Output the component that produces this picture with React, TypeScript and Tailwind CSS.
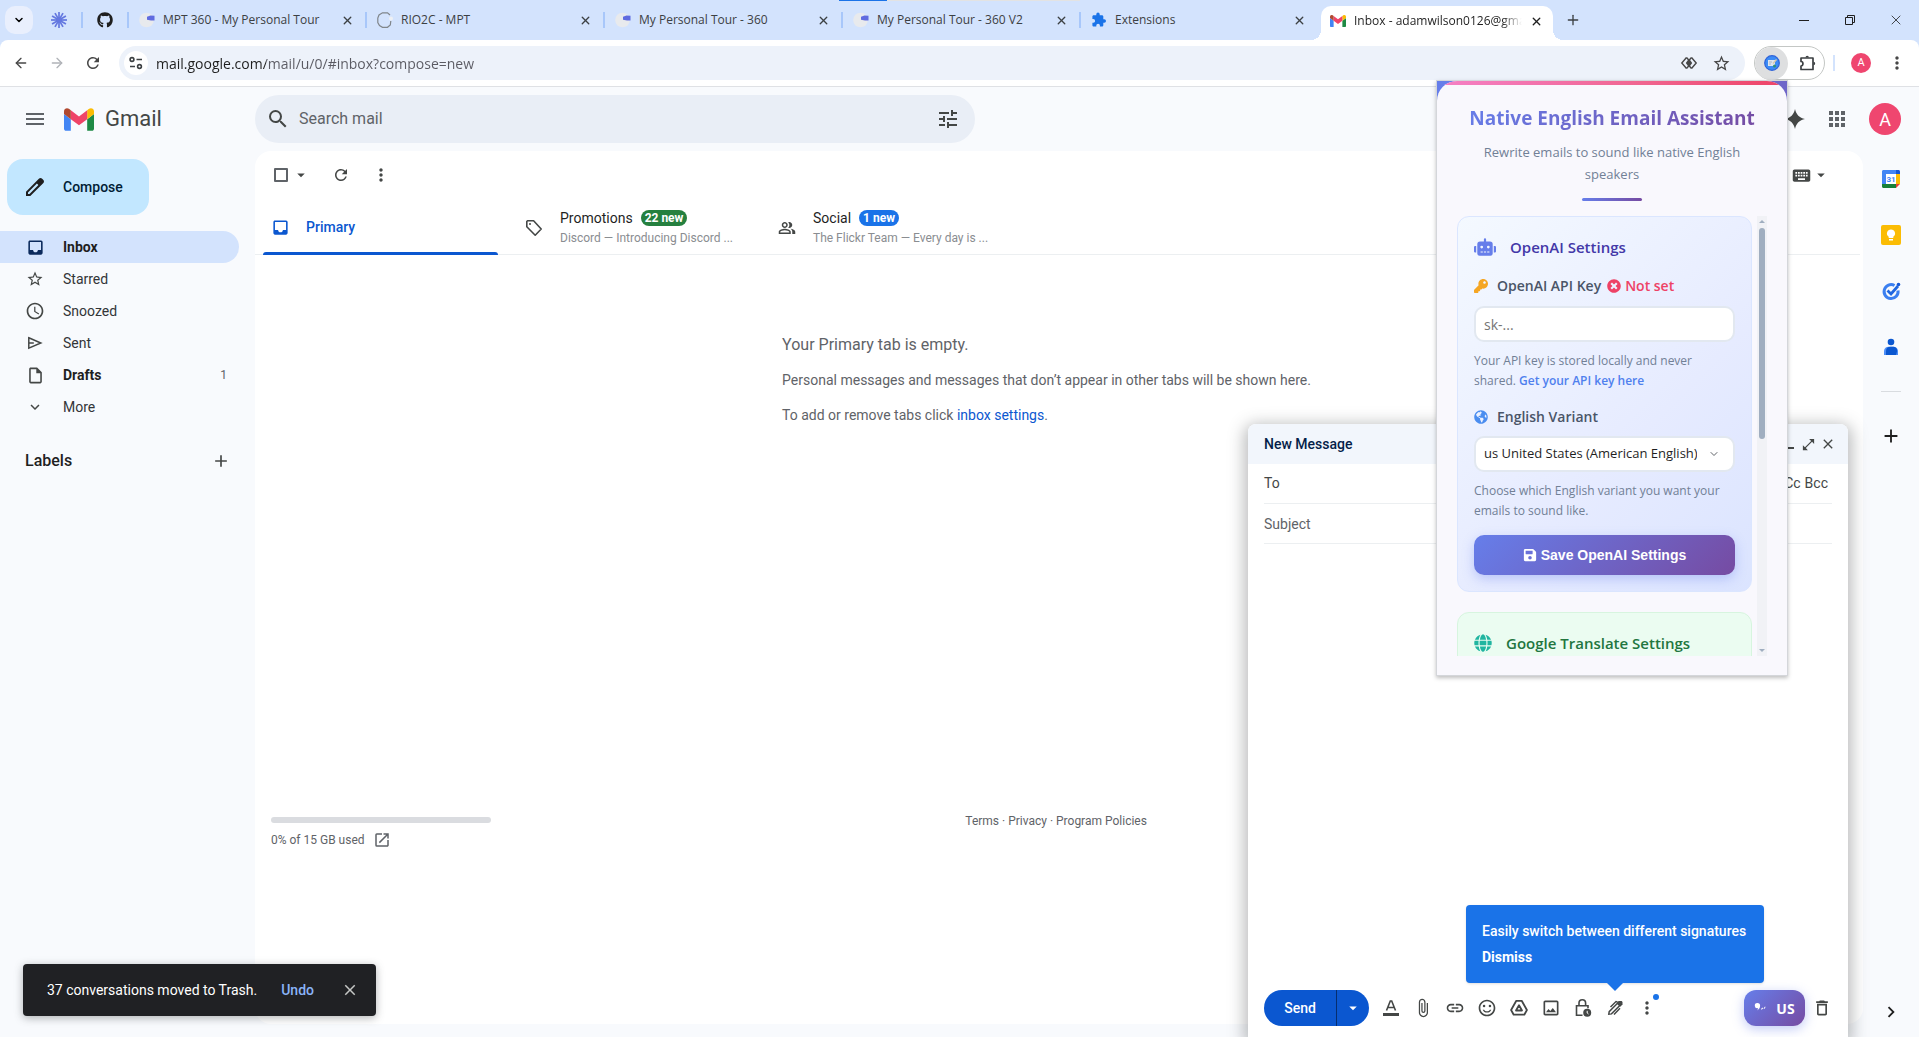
import { useState } from "react"
import type { ReactNode } from "react"
import clsx from "clsx"
import {
  MdAdd,
  MdApps,
  MdArrowDropDown,
  MdAttachFile,
  MdChevronRight,
  MdClose,
  MdDeleteOutline,
  MdInbox,
  MdKeyboard,
  MdKeyboardArrowDown,
  MdLink,
  MdMenu,
  MdMoreVert,
  MdOpenInFull,
  MdOpenInNew,
  MdOutlineImage,
  MdOutlineInsertDriveFile,
  MdOutlinePeopleAlt,
  MdOutlineSentimentSatisfiedAlt,
  MdRefresh,
  MdSchedule,
  MdSearch,
  MdStarBorder,
  MdTune,
} from "react-icons/md"
import { FaGithub, FaGlobe, FaGlobeAmericas, FaKey, FaRobot, FaSave, FaTimesCircle } from "react-icons/fa"
import { ArrowLeft, ArrowRight, ChevronDown, Plus, X } from "lucide-react"

/* ---------- drawings ---------- */

function GmailLogo({ className }: { className?: string }) {
  return (
    <svg viewBox="52 42 88 66" className={className} aria-hidden="true">
      <path fill="#4285f4" d="M58 108h14V74L52 59v43c0 3.32 2.69 6 6 6" />
      <path fill="#1e8a45" d="M120 108h14c3.32 0 6-2.69 6-6V59l-20 15" />
      <path fill="#fbbc04" d="M120 48v26l20-15v-8c0-7.42-8.47-11.65-14.4-7.2" />
      <path fill="#ef4468" d="M72 74V48l24 18 24-18v26L96 92" />
      <path fill="#b0482f" d="M52 51v8l20 15V48l-5.6-4.2c-5.94-4.45-14.4-.22-14.4 7.2" />
    </svg>
  )
}

function BurstIcon() {
  return (
    <svg viewBox="0 0 16 16" className="size-4" aria-hidden="true">
      {[0, 30, 60, 90, 120, 150].map((a) => (
        <line key={a} x1="8" y1="0" x2="8" y2="16" stroke="#6478e0" strokeWidth="1.7" transform={`rotate(${a} 8 8)`} />
      ))}
      <circle cx="8" cy="8" r="3" fill="#6478e0" />
    </svg>
  )
}

function TourFavicon() {
  return (
    <svg viewBox="0 0 16 16" className="size-4" aria-hidden="true">
      <circle cx="7.5" cy="8" r="7.3" fill="#e8eaed" />
      <path d="M8 4.800L11.500 3.500l4 .3v4.700h-3.500L8 7.800z" fill="#5f6be0" />
    </svg>
  )
}

function RingFavicon() {
  return (
    <svg viewBox="0 0 16 16" className="size-4" aria-hidden="true">
      <path d="M13 3L10.500.8h-5L2 3 .8 6v4.500L2.500 13.500l3 1.800h5l2.800-2.300.5-4" fill="none" stroke="#80868b" strokeWidth="1.200" />
      <circle cx="14" cy="6.500" r="2" fill="#eef0f4" />
    </svg>
  )
}

function PuzzleIcon() {
  return (
    <svg viewBox="0 0 16 16" className="size-4" aria-hidden="true">
      <path
        fill="#1a73e8"
        d="M13.3 7.3h-1V4.6c0-.7-.6-1.3-1.3-1.3H8.7V2.2a1.7 1.7 0 0 0-3.4 0v1.1H2.7c-.8 0-1.3.6-1.3 1.3v2.5h.9a1.8 1.8 0 0 1 0 3.6h-.9v2.6c0 .7.6 1.3 1.3 1.3h2.6v-1a1.8 1.8 0 0 1 3.6 0v1h2.1c.7 0 1.3-.6 1.3-1.3v-2.6h1a1.7 1.7 0 0 0 0-3.4z"
      />
    </svg>
  )
}

function TuneCircle() {
  return (
    <svg viewBox="0 0 16 16" className="size-4" fill="none" stroke="#3c4043" strokeWidth="1.6" aria-hidden="true">
      <circle cx="4" cy="4.5" r="1.9" />
      <path d="M8.5 4.5H14M2 11.5h5" />
      <circle cx="11.5" cy="11.5" r="1.9" />
    </svg>
  )
}

function LensIcon() {
  return (
    <svg viewBox="0 0 18 18" className="size-[18px]" fill="none" stroke="#474747" strokeWidth="1.4" aria-hidden="true">
      <path d="M6.500 3.500L1.800 9l4.700 5.500M11.500 3.500L16.200 9l-4.700 5.500" />
      <path d="M6.500 3.500L9 6.500l2.500-3M6.500 14.500L9 11.500l2.500 3" />
      <path d="M9 4.500L5.800 9 9 13.500 12.200 9z" fill="#474747" stroke="none" />
    </svg>
  )
}

function ExtensionsIcon() {
  return (
    <svg viewBox="0 0 18 18" className="size-[18px]" fill="none" stroke="#3c4043" strokeWidth="1.7" strokeLinejoin="round" aria-hidden="true">
      <path d="M2 4h12v11.500H2V12c2.600 0 2.600-4.500 0-4.500z" />
      <path d="M6.500 3.500a1.700 1.700 0 0 1 3.400 0zM14.500 7.800a1.700 1.700 0 0 1 0 3.400z" fill="#3c4043" stroke="none" />
    </svg>
  )
}

function AssistantBadge() {
  return (
    <svg viewBox="0 0 16 16" className="size-4" aria-hidden="true">
      <circle cx="8" cy="8" r="7.300" fill="#3b8bf5" stroke="#2f62d8" strokeWidth="1.200" />
      <rect x="4" y="5" width="7" height="6" fill="#dfe5ee" />
      <path d="M8.500 8l3.500-4 1 1-3.500 4z" fill="#d9c9a8" />
      <path d="M5 7h3M5 9h2" stroke="#9aa7bb" strokeWidth=".8" />
      <circle cx="10.500" cy="11" r="1.500" fill="#2f8f78" />
    </svg>
  )
}

function RestoreIcon() {
  return (
    <svg viewBox="0 0 10 10" className="size-[10px]" fill="none" stroke="#1f1f1f" strokeWidth="1" aria-hidden="true">
      <path d="M.5 2.500h7v7h-7zM2.500 2.500v-2h7v7h-2" />
    </svg>
  )
}

function SparkIcon({ className }: { className?: string }) {
  return (
    <svg viewBox="0 0 24 24" className={className} fill="currentColor" aria-hidden="true">
      <path d="M12 2c1.200 5.600 4.400 8.800 10 10-5.600 1.200-8.800 4.400-10 10-1.200-5.600-4.400-8.800-10-10 5.600-1.200 8.800-4.400 10-10z" />
    </svg>
  )
}

function PencilIcon() {
  return (
    <svg viewBox="0 0 24 24" className="size-6" aria-hidden="true">
      <path
        fill="#1f1f1f"
        d="M20.400 5.100l-1.500-1.500c-.8-.8-2-.8-2.800 0L3 16.700V21h4.300L20.400 7.900c.8-.8.8-2 0-2.800zM6.500 19H5v-1.500l8.900-8.900 1.500 1.500z"
      />
    </svg>
  )
}

function SentIcon() {
  return (
    <svg viewBox="0 0 20 20" className="size-5" fill="none" stroke="#444746" strokeWidth="1.500" aria-hidden="true">
      <path d="M3.800 4.800L15.800 10 3.800 15.200zM3.800 10h5" />
    </svg>
  )
}

function TagIcon() {
  return (
    <svg viewBox="0 0 20 20" className="size-5" fill="none" stroke="#444746" strokeWidth="1.600" strokeLinejoin="round" aria-hidden="true">
      <path d="M2.800 3.500v5.300l8.400 8.400 6-6.200-7.600-8.200H3.500z" />
      <circle cx="6" cy="6" r="1" fill="#444746" stroke="none" />
    </svg>
  )
}

function CalendarIcon() {
  return (
    <svg viewBox="0 0 20 20" className="size-5" aria-hidden="true">
      <path fill="#4285f4" d="M1 2.500C1 1.600 1.600 1 2.500 1H15v4H5v10H1z" />
      <path fill="#1558d6" d="M15 1h2.500c.9 0 1.500.6 1.500 1.500V5h-4z" />
      <path fill="#fbbc04" d="M15 5h4v10h-4z" />
      <path fill="#188038" d="M1 15h14v4H2.500C1.600 19 1 18.400 1 17.500z" />
      <path fill="#ea4335" d="M15 15h4l-4 4z" />
      <path fill="#fff" d="M5 5h10v10H5z" />
      <text x="10" y="13" textAnchor="middle" fontSize="8" fontWeight="700" fontFamily="Roboto, sans-serif" fill="#4285f4">
        31
      </text>
    </svg>
  )
}

function KeepIcon() {
  return (
    <svg viewBox="0 0 20 20" className="size-5" aria-hidden="true">
      <rect width="20" height="20" rx="2" fill="#fbbc04" />
      <path fill="#fff" d="M10 4.500a4 4 0 0 0-2.300 7.300V13h4.600v-1.200A4 4 0 0 0 10 4.500zM8 14h4v1.500H8z" />
    </svg>
  )
}

function TasksIcon() {
  return (
    <svg viewBox="0 0 20 20" className="size-5" fill="none" aria-hidden="true">
      <path d="M13.500 4.500A7 7 0 1 0 17 9.500" stroke="#3b7ff0" strokeWidth="3" />
      <path d="M6.500 9.500l3.500 3.500L17 5" stroke="#1f66e0" strokeWidth="2.800" />
      <circle cx="17.500" cy="3.500" r="1.800" fill="#1558d6" />
    </svg>
  )
}

function ContactsIcon() {
  return (
    <svg viewBox="0 0 20 20" className="size-5" aria-hidden="true">
      <circle cx="10" cy="5" r="3.300" fill="#0b57d0" />
      <path fill="#4c8df6" d="M3 14.500C3 11 5.500 9.800 8 9.800h4c2.500 0 5 1.200 5 4.700V18H3z" />
      <path fill="#0b57d0" d="M5 14c0-3 2-4.200 4.500-4.200h2.700c2 0 4 1.400 4 4.200L15 18H5z" />
    </svg>
  )
}

function DriveIcon() {
  return (
    <svg viewBox="0 0 20 20" className="size-5" fill="none" stroke="#444746" strokeWidth="1.800" strokeLinejoin="round" aria-hidden="true">
      <path d="M7.300 2.800h5.400l5.200 9.200-2.600 4.700H4.700L2.100 12z" />
      <path d="M10 7.300l3 5.200H7z" />
    </svg>
  )
}

function LockClockIcon() {
  return (
    <svg viewBox="0 0 20 20" className="size-5" fill="none" stroke="#444746" strokeWidth="1.600" aria-hidden="true">
      <path d="M9.500 17.200h-6V7.700H15v2.500M6 7.500V5a3.300 3.300 0 0 1 6.600 0v2.500" />
      <circle cx="14.200" cy="14.800" r="4" fill="#444746" stroke="none" />
      <path d="M14.200 12.800v2.200l1.300 1" stroke="#fff" strokeWidth="1" />
    </svg>
  )
}

function SignatureIcon() {
  return (
    <svg viewBox="0 0 20 20" className="size-5" aria-hidden="true">
      <path d="M3.800 16.200l.4-2.600 8.300-8.300 2.300 2.300-8.300 8.300z" fill="none" stroke="#444746" strokeWidth="1.500" />
      <path d="M11.800 4.800l1.800-1.800h3l.9.900v2.600l-2.200 2.200z" fill="#444746" />
      <path d="M5.500 9l5.500-5.500 1.500.5" fill="none" stroke="#444746" strokeWidth="1.500" />
      <path d="M9 16.500l6-6.200" stroke="#444746" strokeWidth="1.500" />
    </svg>
  )
}

function TextFormatIcon() {
  return (
    <svg viewBox="0 0 20 20" className="size-5" fill="none" stroke="#444746" aria-hidden="true">
      <path d="M5.500 12.500L9.300 3h1.400l3.800 9.500M7 9.500h6" strokeWidth="1.600" />
      <path d="M2 16.500h16" strokeWidth="3" />
    </svg>
  )
}

function MinusLow() {
  return (
    <svg viewBox="0 0 16 16" className="size-4" aria-hidden="true">
      <path d="M3 12h10" stroke="#444746" strokeWidth="2" />
    </svg>
  )
}

/* ---------- browser chrome ---------- */

const browserTabs: { title: string; icon: ReactNode }[] = [
  { title: "MPT 360 - My Personal Tour", icon: <TourFavicon /> },
  { title: "RIO2C - MPT", icon: <RingFavicon /> },
  { title: "My Personal Tour - 360", icon: <TourFavicon /> },
  { title: "My Personal Tour - 360 V2", icon: <TourFavicon /> },
  { title: "Extensions", icon: <PuzzleIcon /> },
]

function TabStrip() {
  return (
    <div className="relative flex h-10 items-center bg-[#d3e3fd] font-['Open_Sans',sans-serif]">
      <button aria-label="Search tabs" className="ml-[5px] flex size-7 items-center justify-center rounded-[10px] bg-[#e9effd]">
        <ChevronDown size={12} strokeWidth={3} />
      </button>
      <button aria-label="Pinned tab" className="ml-[18px]">
        <BurstIcon />
      </button>
      <span className="ml-[14px] h-4 w-0.5 bg-[#a8c7fa]" />
      <button aria-label="GitHub" className="ml-[14px]">
        <FaGithub size={16} className="text-[#1f1f1f]" />
      </button>
      <span className="ml-[14px] h-4 w-0.5 bg-[#a8c7fa]" />
      {browserTabs.map((tab, i) => (
        <div key={tab.title} className="flex h-full w-[238px] items-center pl-[10px]">
          {tab.icon}
          <span className="ml-2 flex-1 truncate text-[12px] text-[#3c4043]">{tab.title}</span>
          <button aria-label={`Close ${tab.title}`} className="mr-[11px] text-[#3c4043]">
            <X size={13} strokeWidth={2.5} />
          </button>
          {i < browserTabs.length - 1 ? <span className="h-4 w-0.5 bg-[#a8c7fa]" /> : <span className="w-0.5" />}
        </div>
      ))}
      <div className="relative mt-auto ml-0.5 flex h-[34px] w-[232px] items-center rounded-t-[10px] bg-white pb-1 pl-[9px] before:absolute before:bottom-0 before:-left-2.5 before:size-2.5 before:bg-[radial-gradient(circle_at_0_0,transparent_10px,#fff_10px)] after:absolute after:-right-2.5 after:bottom-0 after:size-2.5 after:bg-[radial-gradient(circle_at_100%_0,transparent_10px,#fff_10px)]">
        <GmailLogo className="h-3 w-4 shrink-0" />
        <span className="ml-2 flex-1 overflow-hidden text-[12px] whitespace-nowrap text-[#1f1f1f] [mask-image:linear-gradient(to_right,#000_88%,transparent)]">
          Inbox - adamwilson0126@gmail.com
        </span>
        <button aria-label="Close Inbox" className="mr-2.5 ml-2 text-[#1f1f1f]">
          <X size={13} strokeWidth={2.5} />
        </button>
      </div>
      <button aria-label="New tab" className="ml-3 text-[#3c4043]">
        <Plus size={16} strokeWidth={2} />
      </button>
      <div className="ml-auto flex items-center">
        <button aria-label="Minimize" className="flex w-[46px] justify-center">
          <span className="h-px w-[10px] bg-[#1f1f1f]" />
        </button>
        <button aria-label="Restore" className="flex w-[46px] justify-center">
          <RestoreIcon />
        </button>
        <button aria-label="Close" className="flex w-[46px] justify-center text-[#1f1f1f]">
          <X size={16} strokeWidth={1.2} />
        </button>
      </div>
      {/* loading bar above the tabs */}
      <span className="absolute top-0 left-[839px] h-px w-[241px] bg-[#e3e3e3]" />
      <span className="absolute top-0 left-[839px] h-px w-12 bg-[#1a73e8]" />
    </div>
  )
}

function AddressBar() {
  const [url, setUrl] = useState("mail.google.com/mail/u/0/#inbox?compose=new")
  return (
    <div className="bg-[#d3e3fd]">
      <div className="flex h-[47px] items-center rounded-t-lg border-b border-[#dfe1e5] bg-white pr-3 text-[#474747]">
        <button aria-label="Back" className="flex w-9 justify-center pl-1.5">
          <ArrowLeft size={16} />
        </button>
        <button aria-label="Forward" className="flex w-9 justify-center pl-1.5 text-[#b0b3b8]">
          <ArrowRight size={16} />
        </button>
        <button aria-label="Reload" className="flex w-9 justify-center pl-1.5">
          <MdRefresh size={18} />
        </button>
        <div className="ml-[11px] flex h-[34px] flex-1 items-center rounded-full bg-[#edf2fa] pr-[14px] pl-[5px]">
          <button aria-label="Site information" className="flex size-6 items-center justify-center rounded-full bg-white">
            <TuneCircle />
          </button>
          <input
            aria-label="Address"
            value={url}
            onChange={(e) => setUrl(e.target.value)}
            className="ml-2 flex-1 bg-[linear-gradient(to_right,#1f1f1f_110px,#5a5a62_110px)] bg-clip-text font-['Open_Sans',sans-serif] text-[14px] text-transparent outline-none"
          />
          <button aria-label="Lens" className="mr-[14px]">
            <LensIcon />
          </button>
          <button aria-label="Bookmark">
            <MdStarBorder size={19} />
          </button>
        </div>
        <div className="ml-[9px] flex h-[34px] items-center rounded-full border border-[#c4c7c5]">
          <button aria-label="Native English Email Assistant" className="flex size-[33px] items-center justify-center rounded-full bg-[#dedfe0]">
            <AssistantBadge />
          </button>
          <button aria-label="Extensions" className="flex w-9 justify-center pl-1">
            <ExtensionsIcon />
          </button>
        </div>
        <span className="ml-2 h-4 w-0.5 bg-[#d3e3fd]" />
        <button aria-label="Profile" className="ml-4 flex size-5 items-center justify-center rounded-full bg-[#ef466f] font-['Roboto',sans-serif] text-[11px] text-white">
          A
        </button>
        <button aria-label="Browser menu" className="ml-4">
          <MdMoreVert size={20} />
        </button>
      </div>
    </div>
  )
}

/* ---------- gmail ---------- */

function GmailHeader() {
  return (
    <header className="flex h-16 shrink-0 items-center">
      <div className="flex w-[255px] shrink-0 items-center pl-[23px]">
        <button aria-label="Main menu" className="text-[#5f6368]">
          <MdMenu size={24} />
        </button>
        <a href="#inbox" className="ml-[17px] flex items-center gap-[11px] text-[22px] leading-6 text-[#444746]">
          <GmailLogo className="h-[23px] w-[30px]" />
          Gmail
        </a>
      </div>
      <div className="flex h-12 w-[720px] items-center rounded-full bg-[#e9eef6] px-[11px] text-[#444746]">
        <button aria-label="Search" className="flex w-6 justify-center">
          <MdSearch size={24} />
        </button>
        <input aria-label="Search mail" placeholder="Search mail" className="ml-[9px] flex-1 text-[16px] outline-none placeholder:text-[#5f6368]" />
        <button aria-label="Search options" className="mr-1">
          <MdTune size={24} />
        </button>
      </div>
      <div className="ml-auto flex items-center pr-[18px]">
        <button aria-label="Assistant" className="text-[#444746]">
          <SparkIcon className="size-6" />
        </button>
        <button aria-label="Google apps" className="ml-[18px] text-[#5f6368]">
          <MdApps size={24} />
        </button>
        <button aria-label="Account" className="ml-5 flex size-8 items-center justify-center rounded-full bg-[#ef466f] text-[18px] text-white">
          A
        </button>
      </div>
    </header>
  )
}

const folders: { name: string; icon: ReactNode; count?: number; bold?: boolean; active?: boolean }[] = [
  { name: "Inbox", icon: <MdInbox size={19} className="text-[#0b2a5c]" />, bold: true, active: true },
  { name: "Starred", icon: <MdStarBorder size={18} /> },
  { name: "Snoozed", icon: <MdSchedule size={20} /> },
  { name: "Sent", icon: <SentIcon /> },
  { name: "Drafts", icon: <MdOutlineInsertDriveFile size={19} />, count: 1, bold: true },
  { name: "More", icon: <MdKeyboardArrowDown size={18} /> },
]

function Sidebar() {
  return (
    <aside className="w-[255px] shrink-0 pt-2">
      <button className="ml-[7px] flex h-14 w-[142px] items-center gap-4 rounded-2xl bg-[#c2e7ff] pl-4 text-[14px] font-medium text-[#001d35]">
        <PencilIcon />
        Compose
      </button>
      <nav className="mt-4">
        {folders.map((f) => (
          <a
            key={f.name}
            href={`#${f.name.toLowerCase()}`}
            className={clsx(
              "mr-4 flex h-8 items-center rounded-r-full pr-3 text-[14px]",
              f.active && "bg-[#d3e3fd]",
              f.bold ? "font-bold text-[#1f1f1f]" : "text-[#333538]"
            )}
          >
            <span className="ml-[25px] flex w-5 justify-center text-[#444746]">{f.icon}</span>
            <span className="ml-[18px] flex-1">{f.name}</span>
            {f.count && <span className="text-[12px] font-normal text-[#5f6368]">{f.count}</span>}
          </a>
        ))}
      </nav>
      <div className="mt-[26px] flex items-center justify-between pr-[24px] pl-[25px] text-[#1f1f1f]">
        <h2 className="text-[16px] leading-6 font-medium">Labels</h2>
        <button aria-label="Create new label" className="text-[#444746]">
          <MdAdd size={20} />
        </button>
      </div>
    </aside>
  )
}

function Badge({ children, className }: { children: ReactNode; className: string }) {
  return <span className={clsx("rounded-full px-1 text-[12px] leading-4 font-bold text-white", className)}>{children}</span>
}

function InboxTabs() {
  return (
    <div role="tablist" className="mr-[3px] flex h-14 border-b border-[#eceff1]">
      <button role="tab" aria-selected="true" className="relative ml-2 flex w-[253px] items-center pt-px pl-2 text-[14px] font-medium text-[#0b57d0]">
        <MdInbox size={19} />
        <span className="ml-4">Primary</span>
        <span className="absolute right-[18px] -bottom-px left-0 h-[3px] rounded-t-sm bg-[#0b57d0]" />
      </button>
      <button role="tab" className="flex w-[253px] items-center gap-4 pt-[3px] pl-2 text-left">
        <TagIcon />
        <span>
          <span className="flex items-center gap-2 text-[14px] leading-5 text-[#1f1f1f]">
            Promotions <Badge className="bg-[#25803f]">22 new</Badge>
          </span>
          <span className="block text-[12px] leading-5 text-[#8a8d91]">Discord — Introducing Discord ...</span>
        </span>
      </button>
      <button role="tab" className="flex w-[253px] items-center gap-4 pt-[3px] pl-2 text-left">
        <span className="flex w-5 justify-center text-[#444746]">
          <MdOutlinePeopleAlt size={18} />
        </span>
        <span>
          <span className="flex items-center gap-2 text-[14px] leading-5 text-[#1f1f1f]">
            Social <Badge className="bg-[#1a73e8]">1 new</Badge>
          </span>
          <span className="block text-[12px] leading-5 text-[#8a8d91]">The Flickr Team — Every day is ...</span>
        </span>
      </button>
    </div>
  )
}

function MailPanel() {
  return (
    <main className="mb-[13px] flex flex-1 flex-col rounded-2xl bg-white">
      <div className="flex h-12 items-center text-[#444746]">
        <input type="checkbox" aria-label="Select all" className="ml-[19px] size-[14px] appearance-none rounded-[1px] border-2 border-[#5f6368]" />
        <button aria-label="Select options" className="ml-1">
          <MdArrowDropDown size={18} />
        </button>
        <button aria-label="Refresh" className="ml-[22px]">
          <MdRefresh size={18} />
        </button>
        <button aria-label="More options" className="ml-[21px]">
          <MdMoreVert size={20} />
        </button>
        <div className="mr-[33px] ml-auto flex items-center">
          <button aria-label="Input tools">
            <MdKeyboard size={21} />
          </button>
          <button aria-label="Select input tool">
            <MdArrowDropDown size={18} />
          </button>
        </div>
      </div>
      <InboxTabs />
      <div className="mx-auto mt-[77px] pr-[25px] text-[14px] text-[#5f6368]">
        <h2 className="text-[16px] leading-[26px]">Your Primary tab is empty.</h2>
        <p className="mt-3 leading-5">Personal messages and messages that don’t appear in other tabs will be shown here.</p>
        <p className="mt-[15px] leading-5">
          To add or remove tabs click{" "}
          <a href="#settings" className="text-[#0b57d0]">
            inbox settings
          </a>
          .
        </p>
      </div>
      <footer className="mt-auto mb-[175px] grid grid-cols-3 px-4 text-[12px] text-[#5f6368]">
        <div>
          <div className="h-1.5 w-[220px] rounded-full bg-[#dadce0]" />
          <a href="#storage" className="mt-2 flex items-center gap-2">
            0% of 15 GB used
            <MdOpenInNew size={18} />
          </a>
        </div>
        <p className="-mt-1 pl-[169px] leading-4">
          <a href="#terms">Terms</a> · <a href="#privacy">Privacy</a> · <a href="#policies">Program Policies</a>
        </p>
      </footer>
    </main>
  )
}

function SideRail() {
  return (
    <aside className="flex w-14 shrink-0 flex-col items-center pt-[18px]">
      <div className="flex flex-col gap-9">
        <button aria-label="Calendar">
          <CalendarIcon />
        </button>
        <button aria-label="Keep">
          <KeepIcon />
        </button>
        <button aria-label="Tasks">
          <TasksIcon />
        </button>
        <button aria-label="Contacts">
          <ContactsIcon />
        </button>
      </div>
      <span className="mt-[34px] h-px w-5 bg-[#d9dce0]" />
      <button aria-label="Get add-ons" className="mt-[33px] text-[#1f1f1f]">
        <MdAdd size={22} />
      </button>
      <button aria-label="Hide side panel" className="mt-auto mb-[14px] text-[#1f1f1f]">
        <MdChevronRight size={22} />
      </button>
    </aside>
  )
}

/* ---------- floating layers ---------- */

function ComposeWindow() {
  return (
    <section
      aria-label="New Message"
      className="absolute top-[424px] right-[71px] bottom-0 flex w-[600px] flex-col rounded-t-lg bg-white shadow-[0_4px_16px_4px_rgba(60,64,67,0.35)]"
    >
      <div className="flex h-10 shrink-0 items-center rounded-t-lg bg-[#f2f6fc] pr-3 pl-4 text-[14px] font-medium text-[#041e49]">
        <h2 className="flex-1">New Message</h2>
        <div className="flex gap-1 text-[#444746]">
          <button aria-label="Minimize">
            <MinusLow />
          </button>
          <button aria-label="Full screen">
            <MdOpenInFull size={15} />
          </button>
          <button aria-label="Close">
            <MdClose size={16} />
          </button>
        </div>
      </div>
      <div className="mx-4 flex h-10 items-center border-b border-[#eceff1] text-[14px] text-[#444746]">
        <label htmlFor="to">To</label>
        <input id="to" className="ml-2 flex-1 outline-none" />
        <button className="mr-1">Cc</button>
        <button className="mr-1">Bcc</button>
      </div>
      <input
        aria-label="Subject"
        placeholder="Subject"
        className="mx-4 h-10 border-b border-[#eceff1] text-[14px] outline-none placeholder:text-[#5f6368]"
      />
      <textarea aria-label="Message Body" className="mx-4 flex-1 resize-none outline-none" />
      <div className="mx-4 mb-[11px] flex h-9 items-center text-[#444746]">
        <div className="mr-3 flex h-9 overflow-hidden rounded-full bg-[#0b57d0] text-[14px] font-medium text-white">
          <button className="w-[72px]">Send</button>
          <button aria-label="More send options" className="flex w-[33px] items-center justify-center border-l border-[#062e6f]">
            <MdArrowDropDown size={18} />
          </button>
        </div>
        <div className="flex items-center gap-3">
          <button aria-label="Formatting options">
            <TextFormatIcon />
          </button>
          <button aria-label="Attach files">
            <MdAttachFile size={20} />
          </button>
          <button aria-label="Insert link">
            <MdLink size={20} />
          </button>
          <button aria-label="Insert emoji">
            <MdOutlineSentimentSatisfiedAlt size={20} />
          </button>
          <button aria-label="Insert files using Drive">
            <DriveIcon />
          </button>
          <button aria-label="Insert photo">
            <MdOutlineImage size={20} />
          </button>
          <button aria-label="Toggle confidential mode">
            <LockClockIcon />
          </button>
          <div className="relative flex">
            <button aria-label="Insert signature">
              <SignatureIcon />
            </button>
            <div
              role="tooltip"
              className="absolute bottom-[35px] left-[-139px] w-[298px] rounded bg-[#1a73e8] px-4 py-[13px] text-[14px] leading-[26px] font-medium text-white shadow after:absolute after:top-full after:left-[141px] after:border-x-8 after:border-t-8 after:border-x-transparent after:border-t-[#1a73e8]"
            >
              <p className="whitespace-nowrap">Easily switch between different signatures</p>
              <button className="font-bold">Dismiss</button>
            </div>
          </div>
          <button aria-label="More options" className="relative">
            <MdMoreVert size={20} />
            <span className="absolute -top-1 -right-0.5 size-1.5 rounded-full bg-[#1a73e8]" />
          </button>
        </div>
        <button className="ml-auto flex h-9 w-[61px] items-center justify-center gap-2.5 rounded-xl bg-[linear-gradient(135deg,#667eea,#764ba2)] font-['Open_Sans',sans-serif] text-[14px] font-bold text-white shadow-[0_3px_12px_rgba(102,126,234,0.4)]">
          <svg viewBox="0 0 12 12" className="size-3" fill="currentColor" aria-hidden="true">
            <path d="M3.500 1a2.600 2.600 0 0 1 2.600 2.600C6.100 6 5 7.500 3 8.500c.8-1 1.100-1.600 1.100-2.400A2.600 2.600 0 1 1 3.500 1zM7 7l1.500-1.500.7.7L7.700 7.700zM9.500 6.500L11 4.500l.6.6-1.300 2z" />
          </svg>
          US
        </button>
        <button aria-label="Discard draft" className="ml-[7px]">
          <MdDeleteOutline size={20} />
        </button>
      </div>
    </section>
  )
}

function Toast() {
  return (
    <div
      role="status"
      className="absolute bottom-[21px] left-[23px] flex h-[52px] w-[353px] items-center rounded bg-[#202124] pl-6 text-[14px] text-white shadow-[0_2px_8px_rgba(60,64,67,0.4)]"
    >
      <span>37 conversations moved to Trash.</span>
      <button className="ml-6 font-medium text-[#8ab4f8]">Undo</button>
      <button aria-label="Close" className="mr-[17px] ml-auto text-[#c4c7c5]">
        <MdClose size={18} />
      </button>
    </div>
  )
}

function AssistantPopup() {
  return (
    <section
      aria-label="Native English Email Assistant"
      className="absolute top-[81px] right-[132px] h-[594px] w-[350px] bg-[linear-gradient(90deg,#667eea,#6f66c8)] font-['Open_Sans',sans-serif] shadow-[0_0_0_1px_#d4d6da,0_2px_4px_1px_rgba(0,0,0,0.25)]"
    >
      <div className="flex h-full flex-col overflow-hidden rounded-t-[20px] bg-[#f9f8fd]">
        <div className="h-1 shrink-0 bg-[linear-gradient(90deg,#f581c6,#f0648e_60%,#ee4266)]" />
        <header className="flex flex-col items-center px-5 pt-5 text-center">
          <h1 className="bg-[linear-gradient(135deg,#667eea,#764ba2)] bg-clip-text text-[19px] leading-[26px] font-bold text-transparent">
            Native English Email Assistant
          </h1>
          <p className="mt-2.5 px-4 text-[13px] leading-[22px] text-[#718096]">Rewrite emails to sound like native English speakers</p>
          <span className="mt-[13px] h-[3px] w-[60px] rounded-full bg-[linear-gradient(90deg,#667eea,#764ba2)]" />
        </header>

        <div className="mt-[15px] mb-[19px] flex min-h-0 flex-1 px-5">
          <div className="flex min-w-0 flex-1 flex-col gap-5 overflow-hidden">
            <div className="shrink-0 rounded-xl border border-[#dbe6ff] bg-[linear-gradient(135deg,#f4f9ff,#e6ebff_60%,#dbe4ff)] px-4 pt-[17px] pb-4">
              <h2 className="flex items-center gap-[14px] text-[15px] leading-[26px] font-semibold text-[#4338a8]">
                <FaRobot size={22} className="text-[#667eea]" />
                OpenAI Settings
              </h2>
              <div className="mt-4 flex items-center text-[14px] leading-5 font-semibold text-[#4a5568]">
                <FaKey size={14} className="text-[#f5a623]" />
                <label htmlFor="api-key" className="ml-[9px]">
                  OpenAI API Key
                </label>
                <span className="ml-1.5 flex items-center gap-1 text-[#ee4266]">
                  <FaTimesCircle size={14} /> Not set
                </span>
              </div>
              <input
                id="api-key"
                placeholder="sk-..."
                className="mt-[10px] block h-9 w-full rounded-[10px] border-2 border-[#e2e8f0] bg-white px-2 text-[14px] outline-none placeholder:text-[#757575]"
              />
              <p className="mt-[9px] text-[12px] leading-[20px] text-[#718096]">
                Your API key is stored locally and never shared.{" "}
                <a href="#api-key" className="font-semibold text-[#4f80ee]">
                  Get your API key here
                </a>
              </p>
              <div className="mt-4 flex items-center text-[14px] leading-5 font-semibold text-[#4a5568]">
                <FaGlobeAmericas size={14} className="text-[#4a8df0]" />
                <label htmlFor="variant" className="ml-[9px]">
                  English Variant
                </label>
              </div>
              <div className="relative mt-[9px]">
                <select
                  id="variant"
                  className="block h-9 w-full appearance-none rounded-[10px] border-2 border-[#e2e8f0] bg-white pr-9 pl-2 text-[13px] text-[#1f1f1f]"
                >
                  <option>us United States (American English)</option>
                </select>
                <ChevronDown size={12} className="pointer-events-none absolute top-3 right-[15px] text-[#5f6368]" />
              </div>
              <p className="mt-[9px] text-[12px] leading-[20px] text-[#718096]">Choose which English variant you want your emails to sound like.</p>
              <button className="mt-[14px] flex h-10 w-full items-center justify-center gap-1 rounded-[10px] bg-[linear-gradient(135deg,#667eea,#764ba2)] font-['Liberation_Sans',sans-serif] text-[14px] font-bold text-white shadow-[0_4px_12px_rgba(102,126,234,0.35)]">
                <FaSave size={14} />
                Save OpenAI Settings
              </button>
            </div>

            <div className="shrink-0 rounded-xl border border-[#d7f5df] bg-[#ebfcf1] px-4 pt-[17px] pb-8">
              <h2 className="flex items-center gap-[14px] text-[15px] leading-[26px] font-semibold text-[#22763f]">
                <FaGlobe size={18} className="text-[#20b5a0]" />
                Google Translate Settings
              </h2>
            </div>
          </div>

          {/* scrollbar */}
          <div className="ml-[5px] flex w-[10px] flex-col items-center bg-[#f1f2f6]">
            <span className="mt-1 border-x-[3px] border-b-[3px] border-x-transparent border-b-[#a0aec0]" />
            <span className="mt-[5px] h-[211px] w-1.5 rounded-full bg-[#a0aec0]" />
            <span className="mt-auto mb-1 border-x-[3px] border-t-[3px] border-x-transparent border-t-[#a0aec0]" />
          </div>
        </div>
      </div>
    </section>
  )
}

export default function App() {
  return (
    <div className="relative flex h-screen flex-col overflow-hidden bg-[#f8fafd] font-['Roboto',sans-serif]">
      <TabStrip />
      <AddressBar />
      <GmailHeader />
      <div className="flex min-h-0 flex-1">
        <Sidebar />
        <MailPanel />
        <SideRail />
      </div>
      <Toast />
      <ComposeWindow />
      <AssistantPopup />
    </div>
  )
}
